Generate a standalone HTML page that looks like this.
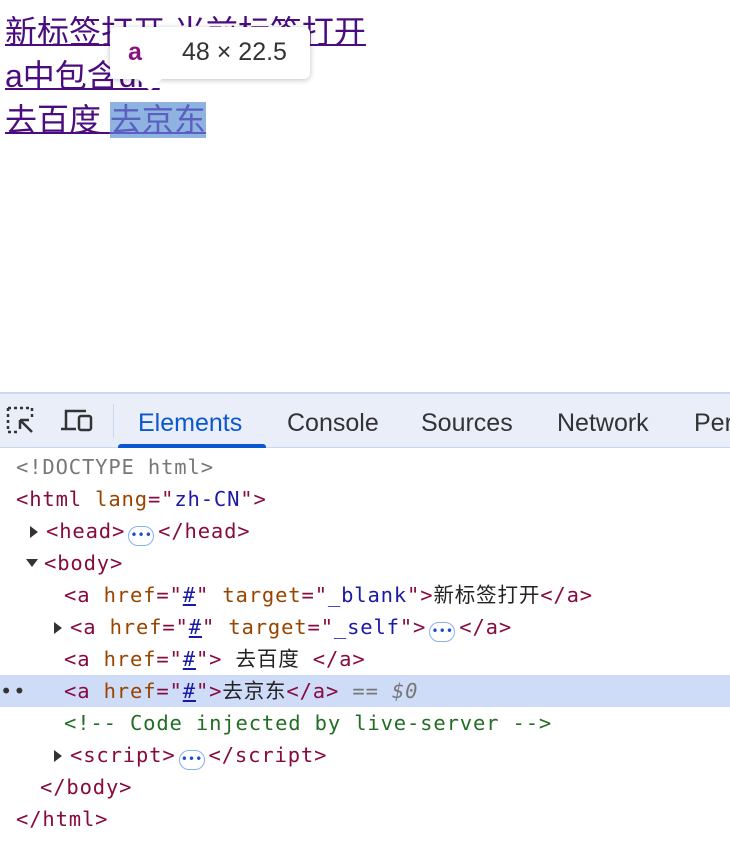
<!DOCTYPE html>
<html><head><style>
body{margin:0;width:730px;height:856px;overflow:hidden;background:#fff;position:relative;font-family:"Liberation Sans","Noto Sans CJK SC",sans-serif}
.pg{position:absolute;left:5px;top:10px;font-size:32px;line-height:44px;color:#4b0c80}
.pg a{color:#4b0c80;text-decoration:underline;text-decoration-thickness:2px}
.hl{background:#8fb3e0;color:#5a5fc0!important}
.tip{position:absolute;left:110px;top:27px;width:200px;height:52px;background:#fff;border-radius:6px;box-shadow:0 1px 6px rgba(0,0,0,.25);font-size:25px}
.tip:after{content:"";position:absolute;left:28px;bottom:-12px;border:12px solid transparent;border-top-color:#fff;border-bottom:0}
.dt{position:absolute;left:0;top:392px;width:730px;height:464px}
.tb{height:53px;background:#e9eef9;border-top:2px solid #c9d7f1;border-bottom:1px solid #c9d7f1;position:relative;font-size:25px;color:#333}
.tb span{position:absolute;top:15px}
.code{font-family:"DejaVu Sans Mono","Liberation Mono",monospace;font-size:20.5px;letter-spacing:0.85px;position:absolute;top:59px;left:0;width:730px}
.l{height:32px;line-height:32px;white-space:pre;position:relative}
.t{color:#870b40}.n{color:#994500}.v{color:#1a1aa6}.g{color:#777}.c{color:#236e25}.k{color:#222}
.u{text-decoration:underline;color:#1a1aa6}
.tri{display:inline-block;width:0;height:0;border-style:solid}
.r{border-width:6px 0 6px 8px;border-color:transparent transparent transparent #333;margin-right:8px}
.d{border-width:8px 6px 0 6px;border-color:#333 transparent transparent transparent;margin-right:6px;vertical-align:3px}
.el{display:inline-block;width:26px;height:20px;border:1.5px solid #8ab0f0;border-radius:10px;vertical-align:-1px;font-size:12px;line-height:16px;text-align:center;color:#1a4fcf;letter-spacing:0;margin:0 4px 0 3px;box-sizing:border-box}
</style></head><body>
<div class="pg"><a>新标签打开</a> <a>当前标签打开</a><br><a>a中包含div</a><br><a>去百度 </a><a class="hl">去京东</a></div>
<div class="tip"><b style="position:absolute;left:18px;top:11px;color:#881280">a</b><span style="position:absolute;left:72px;top:11px;color:#333">48 × 22.5</span></div>
<div class="dt">
<div class="tb">
<svg style="position:absolute;left:6px;top:12px" width="30" height="30" viewBox="0 0 30 30" fill="none" stroke="#333" stroke-width="2.5"><path d="M2 2h24v12M2 2v24h12" stroke-dasharray="3 3"/><path d="M14 14l12 12M14 14h9M14 14v9"/></svg>
<svg style="position:absolute;left:60px;top:14px" width="34" height="26" viewBox="0 0 34 26" fill="none" stroke="#333" stroke-width="2.5"><path d="M6 20V3h20M1 21h15"/><rect x="19" y="8" width="12" height="14" rx="2"/></svg>
<div style="position:absolute;left:113px;top:10px;width:1px;height:34px;background:#c9d7f1"></div>
<span style="left:138px;color:#0b57d0">Elements</span>
<div style="position:absolute;left:118px;bottom:-1px;width:148px;height:4px;background:#0b57d0;border-radius:3px 3px 0 0"></div>
<span style="left:287px">Console</span><span style="left:421px">Sources</span><span style="left:557px">Network</span><span style="left:694px">Perf</span>
</div>
<div class="code">
<div class="l" style="padding-left:16px"><span class="g">&lt;!DOCTYPE html&gt;</span></div>
<div class="l" style="padding-left:16px"><span class="t">&lt;html </span><span class="n">lang</span><span class="t">="</span><span class="v">zh-CN</span><span class="t">"&gt;</span></div>
<div class="l" style="padding-left:30px"><i class="tri r"></i><span class="t">&lt;head&gt;</span><span class="el">•••</span><span class="t">&lt;/head&gt;</span></div>
<div class="l" style="padding-left:26px"><i class="tri d"></i><span class="t">&lt;body&gt;</span></div>
<div class="l" style="padding-left:64px"><span class="t">&lt;a </span><span class="n">href</span><span class="t">="</span><span class="u">#</span><span class="t">" </span><span class="n">target</span><span class="t">="</span><span class="v">_blank</span><span class="t">"&gt;</span><span class="k">新标签打开</span><span class="t">&lt;/a&gt;</span></div>
<div class="l" style="padding-left:54px"><i class="tri r"></i><span class="t">&lt;a </span><span class="n">href</span><span class="t">="</span><span class="u">#</span><span class="t">" </span><span class="n">target</span><span class="t">="</span><span class="v">_self</span><span class="t">"&gt;</span><span class="el">•••</span><span class="t">&lt;/a&gt;</span></div>
<div class="l" style="padding-left:64px"><span class="t">&lt;a </span><span class="n">href</span><span class="t">="</span><span class="u">#</span><span class="t">"&gt;</span><span class="k"> 去百度 </span><span class="t">&lt;/a&gt;</span></div>
<div class="l" style="padding-left:64px;background:#cfdcf8"><span style="position:absolute;left:0;color:#333">••</span><span class="t">&lt;a </span><span class="n">href</span><span class="t">="</span><span class="u">#</span><span class="t">"&gt;</span><span class="k">去京东</span><span class="t">&lt;/a&gt;</span><span class="g"> == <i>$0</i></span></div>
<div class="l" style="padding-left:64px"><span class="c">&lt;!-- Code injected by live-server --&gt;</span></div>
<div class="l" style="padding-left:54px"><i class="tri r"></i><span class="t">&lt;script&gt;</span><span class="el">•••</span><span class="t">&lt;/script&gt;</span></div>
<div class="l" style="padding-left:40px"><span class="t">&lt;/body&gt;</span></div>
<div class="l" style="padding-left:16px"><span class="t">&lt;/html&gt;</span></div>
</div>
</div>
</body></html>
